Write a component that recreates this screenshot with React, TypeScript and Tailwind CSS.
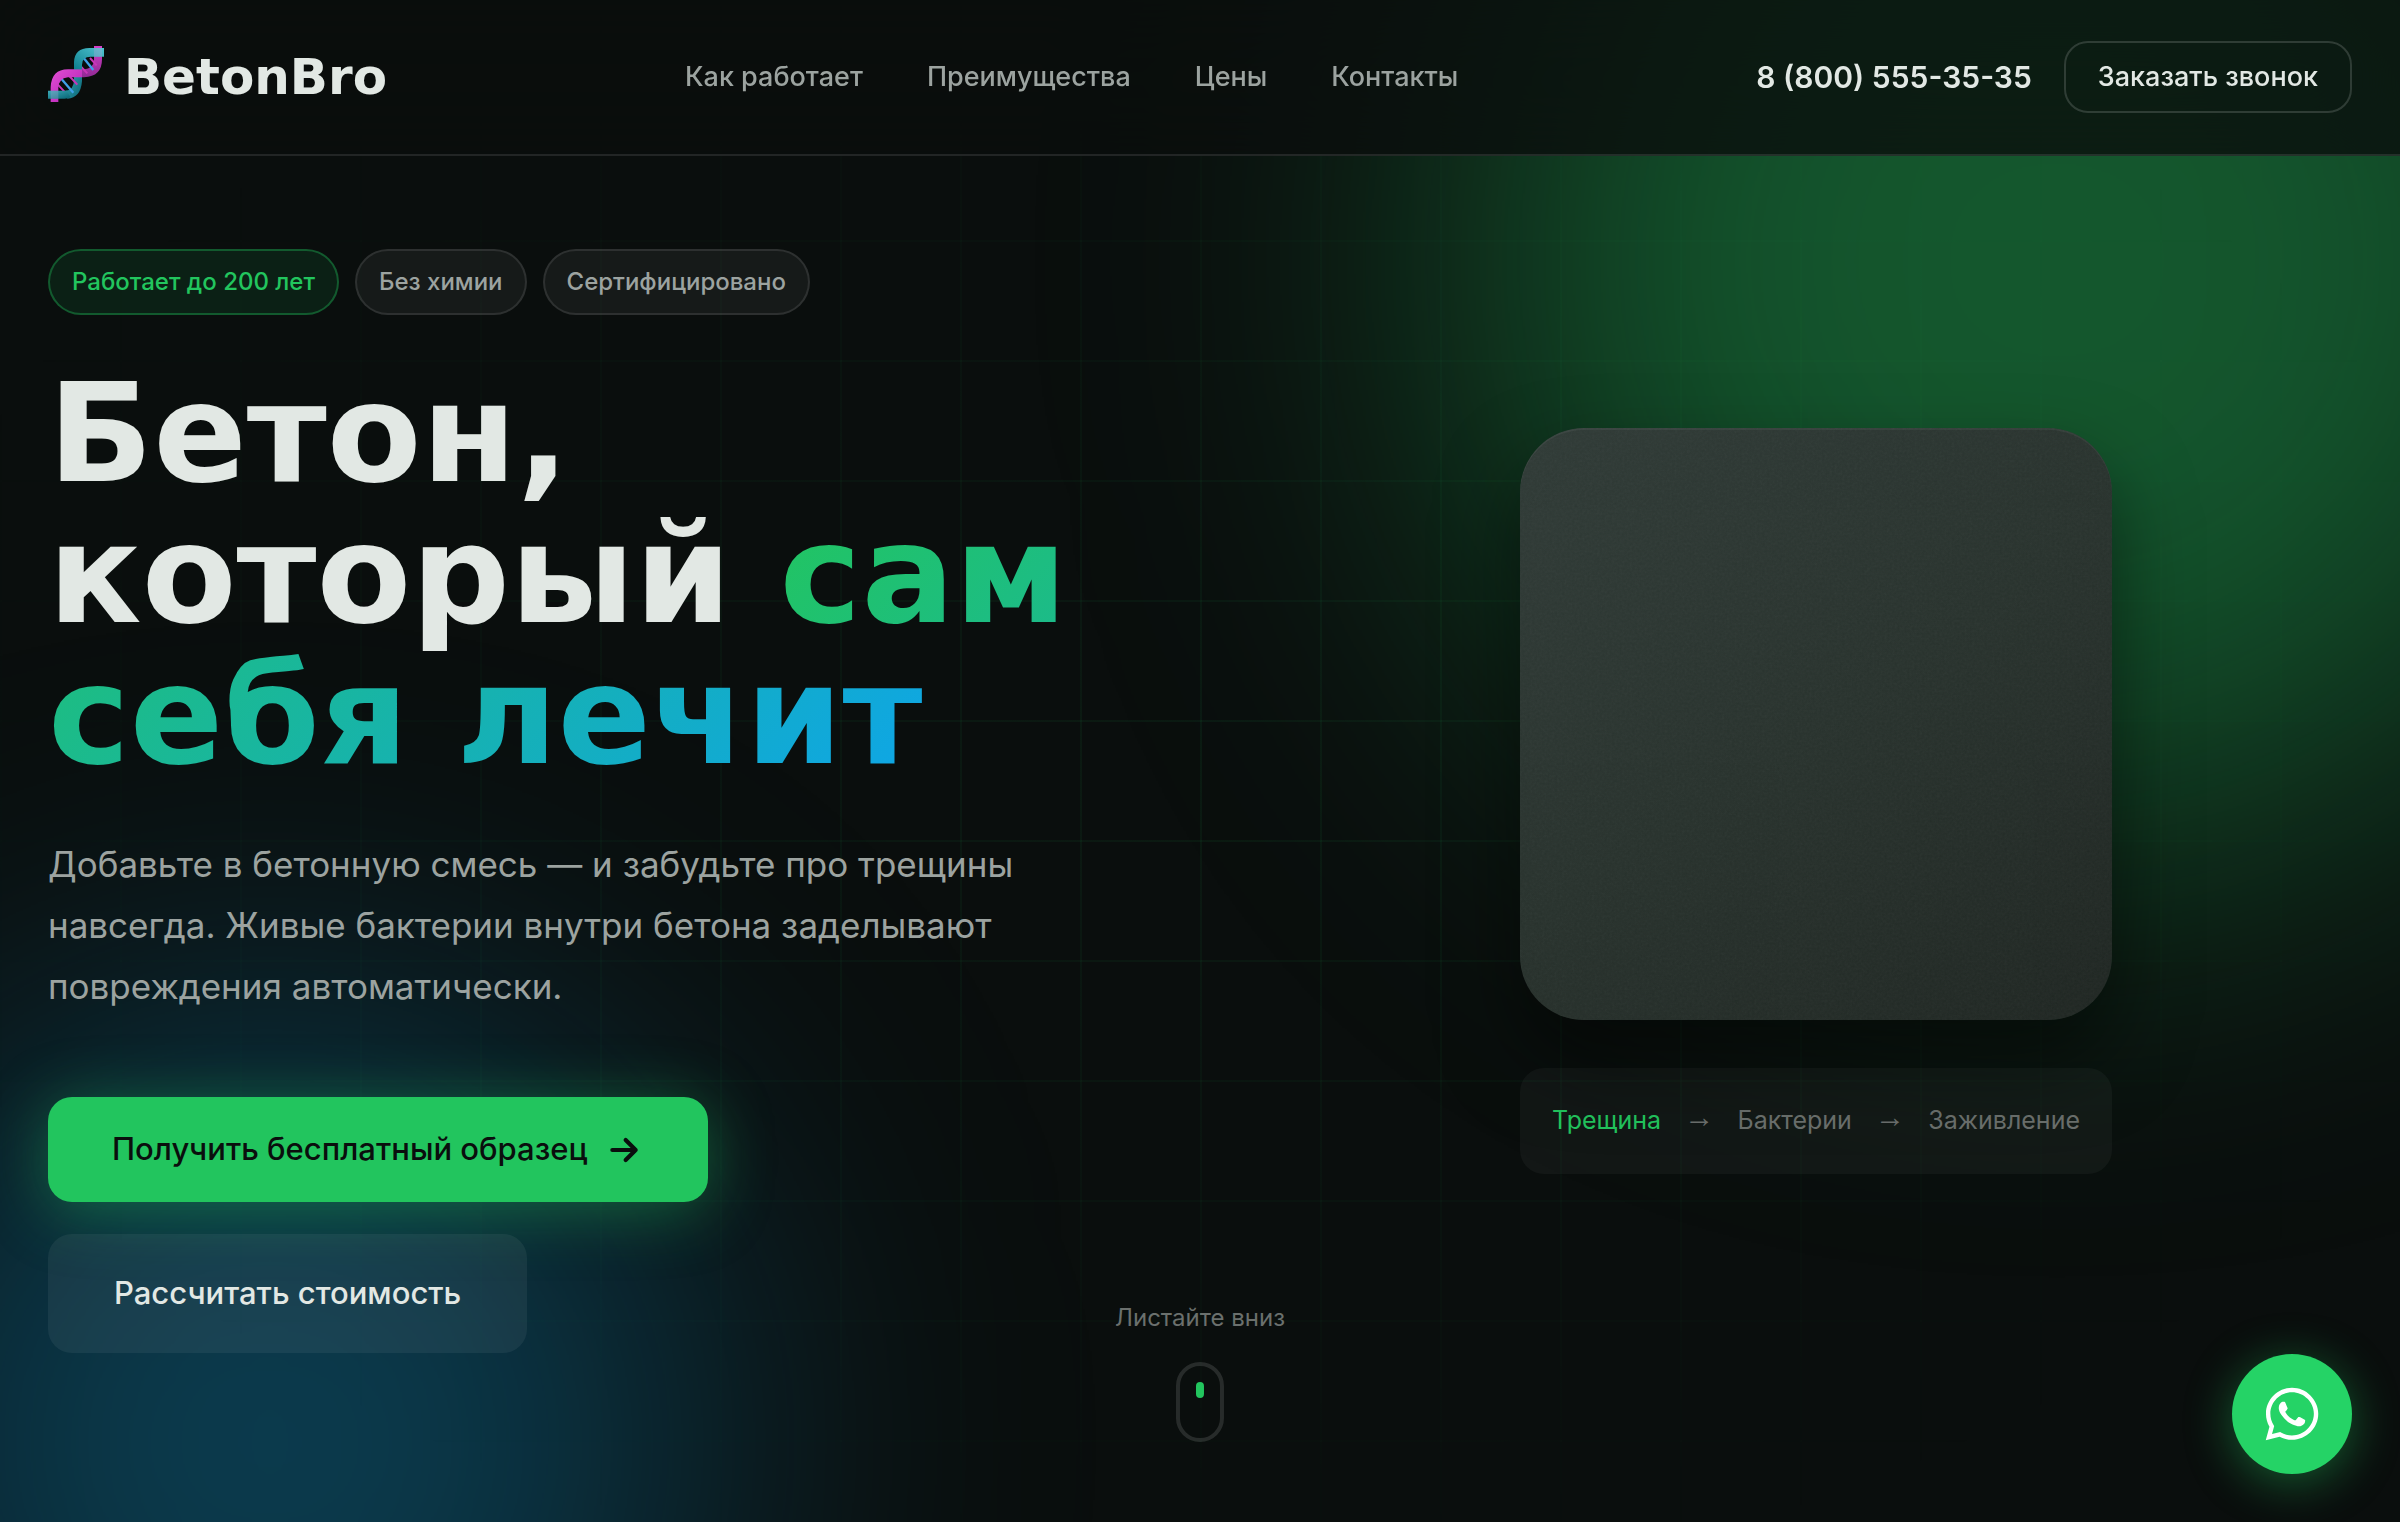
import { FaWhatsapp } from "react-icons/fa";

const navLinks = [
  { label: "Как работает", href: "#how" },
  { label: "Преимущества", href: "#benefits" },
  { label: "Цены", href: "#prices" },
  { label: "Контакты", href: "#contacts" },
];

const steps = ["Трещина", "Бактерии", "Заживление"];

const DnaLogo = () => (
  <svg
    className="size-14 shrink-0"
    viewBox="24 18 168 168"
    fill="none"
    aria-hidden="true"
  >
    <defs>
      <linearGradient id="pink" x1="0" y1="0" x2="1" y2="1">
        <stop offset="0" stopColor="#e34fd4" />
        <stop offset="1" stopColor="#b01fb4" />
      </linearGradient>
      <linearGradient id="violet" x1="0" y1="0" x2="0" y2="1">
        <stop offset="0" stopColor="#d63fc9" />
        <stop offset="1" stopColor="#8f2a94" />
      </linearGradient>
      <linearGradient id="teal" x1="0" y1="1" x2="1" y2="0">
        <stop offset="0" stopColor="#0d7f8f" />
        <stop offset="1" stopColor="#4fc4d0" />
      </linearGradient>
      <linearGradient id="teal-end" x1="0" y1="0" x2="1" y2="1">
        <stop offset="0" stopColor="#3aa9b7" />
        <stop offset="1" stopColor="#086575" />
      </linearGradient>
    </defs>
    {/* back strands */}
    <path d="M162 18h24v40q0 52-54 54h-18l6-24q42 2 42-30z" fill="url(#violet)" />
    <path d="M102 84h24v40q-4 50-44 52l-6-24q26 0 26-34z" fill="url(#teal-end)" />
    {/* rungs */}
    <path d="M128 50l32 40" stroke="#3f9fe8" strokeWidth="7" />
    <path d="M110 66l32 34M150 54l20 22" stroke="#c936b8" strokeWidth="6" />
    <path d="M64 116l36 42" stroke="#3f9fe8" strokeWidth="7" />
    <path d="M48 128l28 30M88 108l24 26" stroke="#c936b8" strokeWidth="6" />
    {/* front strands */}
    <path d="M32 186v-44q2-54 52-54h42v24H84q-28 2-29 32v42z" fill="url(#pink)" />
    <path d="M102 88V66q2-42 46-42h44v26h-40q-26 0-26 24v14z" fill="url(#teal)" />
    <path d="M24 152h56l12 20q-10 4-18 4H24z" fill="url(#teal-end)" />
    <path d="M162 24h24v26h-24zM32 152h23v24H32z" fill="#b9a6dc" opacity="0.3" />
  </svg>
);

const Header = () => (
  <header className="fixed inset-x-0 top-0 z-50 flex items-center justify-between border-b-2 border-white/10 bg-[rgba(10,14,13,0.8)] px-12 py-[41px] backdrop-blur-2xl">
    <a
      href="#top"
      className="flex items-start gap-5 font-['DejaVu_Sans',sans-serif] text-[50px] leading-[62px] font-bold"
    >
      <DnaLogo />
      BetonBro
    </a>
    <nav className="flex gap-16 text-[27px] font-medium text-[#9ca3a0]">
      {navLinks.map((link) => (
        <a key={link.href} href={link.href} className="hover:text-white">
          {link.label}
        </a>
      ))}
    </nav>
    <div className="flex items-center gap-8">
      <a href="tel:88005553535" className="text-3xl font-semibold">
        8 (800) 555-35-35
      </a>
      <button className="h-[72px] rounded-3xl border-2 border-white/15 px-8 text-[27px] font-medium hover:bg-white/5">
        Заказать звонок
      </button>
    </div>
  </header>
);

const Background = () => (
  <div className="pointer-events-none absolute inset-0 overflow-hidden">
    <div className="absolute -top-[330px] -right-[247px] size-[1180px] rounded-full bg-[rgba(34,197,94,0.4)] blur-[200px]" />
    <div className="absolute -bottom-[350px] -left-[160px] size-[860px] rounded-full bg-[rgba(14,165,233,0.3)] blur-[190px]" />
    <div className="absolute inset-0 bg-[linear-gradient(rgba(34,197,94,0.07)_2px,transparent_2px),linear-gradient(90deg,rgba(34,197,94,0.07)_2px,transparent_2px)] mask-[radial-gradient(ellipse_at_center,black_0%,transparent_80%)] bg-size-[120px_120px]" />
  </div>
);

const ConcreteCard = () => (
  <div className="relative aspect-square w-full overflow-hidden rounded-[64px] bg-[linear-gradient(145deg,#303b37,#28322d_50%,#1f2622)] shadow-[0_40px_80px_rgba(0,0,0,0.5)]">
    <svg className="absolute inset-0 size-full opacity-5" aria-hidden="true">
      <filter id="grain">
        <feTurbulence type="fractalNoise" baseFrequency="0.4" numOctaves="4" />
        <feColorMatrix type="saturate" values="0" />
      </filter>
      <rect width="100%" height="100%" filter="url(#grain)" />
    </svg>
    <div className="absolute inset-0 rounded-[64px] shadow-[inset_0_2px_0_rgba(255,255,255,0.05)]" />
  </div>
);

const App = () => {
  return (
    <div
      id="top"
      className="min-h-screen bg-[#0a0e0d] font-['Inter','Noto_Sans',sans-serif] text-[#e2e8e4]"
    >
      <Header />

      <main className="relative flex min-h-screen items-center px-12 pt-40 pb-20">
        <Background />

        <div className="relative grid w-full grid-cols-2 items-center gap-40">
          <section>
            <ul className="flex flex-wrap gap-4 text-2xl leading-9 font-medium text-[#9ca3a0]">
              <li className="rounded-full border-2 border-[#22c55e]/35 bg-[#22c55e]/10 px-[22px] py-[13px] leading-9 text-[#22c55e]">
                Работает до 200 лет
              </li>
              <li className="rounded-full border-2 border-white/10 bg-white/5 px-[22px] py-[13px] leading-9">
                Без химии
              </li>
              <li className="rounded-full border-2 border-white/10 bg-white/5 px-[22px] py-[13px] leading-9">
                Сертифицировано
              </li>
            </ul>

            <h1 className="mt-12 font-['DejaVu_Sans',sans-serif] text-[138px] leading-[141px] font-bold">
              Бетон, который{" "}
              <span className="bg-[linear-gradient(135deg,#22c55e,#0ea5e9)] bg-clip-text text-transparent">
                сам себя лечит
              </span>
            </h1>

            <p className="mt-12 text-[35px] leading-[61px] text-[#9ca3a0]">
              Добавьте в бетонную смесь — и забудьте про трещины навсегда. Живые
              бактерии внутри бетона заделывают повреждения автоматически.
            </p>

            <div className="mt-20 flex flex-wrap items-start gap-8 text-[31px]">
              <button className="flex h-[105px] items-center gap-4 rounded-3xl bg-[#22c55e] px-16 font-medium text-[#0a0e0d] shadow-[0_8px_64px_rgba(34,197,94,0.4)]">
                Получить бесплатный образец
                <svg
                  className="size-10"
                  viewBox="0 0 24 24"
                  fill="none"
                  stroke="currentColor"
                  strokeWidth="2.5"
                  strokeLinecap="round"
                  strokeLinejoin="round"
                  aria-hidden="true"
                >
                  <path d="M5 12h14M13 6l6 6-6 6" />
                </svg>
              </button>
              <button className="h-[119px] rounded-3xl bg-white/6 px-[66px] font-medium">
                Рассчитать стоимость
              </button>
            </div>
          </section>

          <section className="mx-auto flex w-[592px] flex-col gap-12">
            <ConcreteCard />
            <ol className="flex h-[106px] items-center justify-between rounded-3xl bg-white/4 px-8 text-[25px] text-[#6b706d]">
              {steps.map((step, i) => (
                <li key={step} className="contents">
                  {i > 0 && (
                    <span className="pb-2 font-['Liberation_Sans',sans-serif] text-3xl">
                      →
                    </span>
                  )}
                  <span className={i === 0 ? "text-[#22c55e]" : ""}>{step}</span>
                </li>
              ))}
            </ol>
          </section>
        </div>

        <div className="absolute bottom-20 left-1/2 flex -translate-x-1/2 flex-col items-center gap-6 text-2xl leading-10 text-[#6b706d]">
          Листайте вниз
          <div className="flex h-20 w-12 justify-center rounded-3xl border-4 border-white/12 pt-4">
            <div className="h-4 w-2 rounded-full bg-[#22c55e]" />
          </div>
        </div>
      </main>

      <a
        href="https://wa.me/88005553535"
        aria-label="WhatsApp"
        className="fixed right-12 bottom-12 z-50 flex size-[120px] items-center justify-center rounded-full bg-[#25d366] text-white shadow-[0_8px_48px_rgba(37,211,102,0.4)]"
      >
        <FaWhatsapp className="size-[60px]" />
      </a>
    </div>
  );
};

export default App;
